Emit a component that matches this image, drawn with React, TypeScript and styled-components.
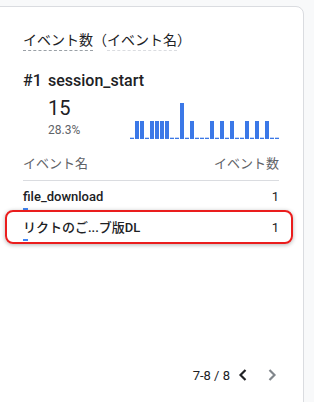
import React from "react";
import styled, { createGlobalStyle } from "styled-components";

const GlobalStyle = createGlobalStyle`
  html, body {
    margin: 0;
    padding: 0;
    background: #f8f9fa;
    overflow: hidden;
    height: 100%;
  }
  body {
    font-family: Roboto, "Noto Sans CJK JP", "Noto Sans", sans-serif;
    color: #202124;
  }
`;

const Card = styled.div`
  box-sizing: border-box;
  margin: 6px 0 0 -10px;
  width: 314px;
  height: 420px;
  background: #fff;
  border: 1px solid #dadce0;
  border-radius: 8px;
  padding: 24px 24px 0 32px;
  display: flex;
  flex-direction: column;
`;

const Title = styled.div`
  display: flex;
  align-items: flex-start;
  font-size: 14px;
  line-height: 19px;
  color: #202124;
`;

const Dimension = styled.span<{ $light?: boolean }>`
  display: inline-block;
  line-height: 19px;
  border-bottom: 1px dashed ${(p) => (p.$light ? "#dadce0" : "#9aa0a6")};
`;

const Paren = styled.span`
  display: inline-block;
  line-height: 19px;
`;

const Heading = styled.div`
  margin-top: 18px;
  font-size: 16px;
  line-height: 24px;
  font-weight: 500;
  color: #202124;
  display: flex;
`;

const Rank = styled.span`
  width: 25px;
  flex: none;
`;

const StatRow = styled.div`
  margin-top: 3px;
  display: flex;
  align-items: flex-end;
`;

const StatBlock = styled.div`
  box-sizing: border-box;
  width: 107px;
  padding-left: 25px;
  display: flex;
  flex-direction: column;
`;

const BigNumber = styled.div`
  font-size: 20px;
  line-height: 24px;
  color: #202124;
`;

const Percent = styled.div`
  margin-top: 2px;
  font-size: 12px;
  line-height: 17px;
  color: #5f6368;
`;

const Chart = styled.svg`
  display: block;
  flex: none;
`;

const TableHeader = styled.div`
  margin-top: 15px;
  display: flex;
  justify-content: space-between;
  font-size: 13px;
  line-height: 20px;
  color: #5f6368;
  padding-bottom: 6px;
  border-bottom: 1px solid #dadce0;
`;

const Row = styled.div`
  position: relative;
  padding: 6px 0 2px;
`;

const RowLine = styled.div`
  display: flex;
  justify-content: space-between;
  font-size: 13px;
  line-height: 20px;
`;

const RowName = styled.span`
  font-weight: 500;
  color: #202124;
`;

const RowValue = styled.span`
  color: #202124;
`;

const RowBar = styled.div`
  margin-top: 1px;
  height: 2px;
  background: #4285f4;
`;

const Highlight = styled.div`
  position: absolute;
  top: -2px;
  bottom: -1px;
  left: -18px;
  right: -14px;
  border: 2px solid #ea1d1d;
  border-radius: 8px;
  box-shadow: 0 1px 4px rgba(0, 0, 0, 0.3);
  pointer-events: none;
`;

const Pagination = styled.div`
  margin-top: 120px;
  margin-right: -3px;
  display: flex;
  justify-content: flex-end;
  align-items: center;
  height: 24px;
  font-size: 13px;
  color: #202124;
`;

const PageLabel = styled.span`
  margin-right: 3px;
`;

const PageButton = styled.button<{ $disabled?: boolean }>`
  width: 20px;
  height: 24px;
  padding: 0;
  margin: 0 0 0 ${(p) => (p.$disabled ? "9px" : "0")};
  border: none;
  background: none;
  display: flex;
  align-items: center;
  justify-content: center;
  color: ${(p) => (p.$disabled ? "#80868b" : "#202124")};
`;

const bars = [0, 1, 1, 0, 1, 1, 1, 1, 0, 0, 2, 0, 1, 0, 0, 0, 1, 0, 1, 0, 1, 0, 0, 1, 0, 1, 0, 1, 0, 0];

const rows = [
  { name: "file_download", count: 1, highlighted: false },
  { name: "リクトのご...ブ版DL", count: 1, highlighted: true },
];

const Chevron = ({ dir }: { dir: "left" | "right" }) => (
  <svg width="20" height="20" viewBox="0 0 24 24" fill="none">
    <path
      d={dir === "left" ? "M15 6l-6 6 6 6" : "M9 6l6 6-6 6"}
      stroke="currentColor"
      strokeWidth="2.6"
      strokeLinecap="butt"
      strokeLinejoin="miter"
    />
  </svg>
);

export default function App() {
  const chartH = 36;
  return (
    <>
      <GlobalStyle />
      <Card>
        <Title>
          <Dimension>イベント数</Dimension>
          <Paren>（</Paren>
          <Dimension $light>イベント名</Dimension>
          <Paren>）</Paren>
        </Title>
        <Heading>
          <Rank>#1</Rank>
          <span>session_start</span>
        </Heading>
        <StatRow>
          <StatBlock>
            <BigNumber>15</BigNumber>
            <Percent>28.3%</Percent>
          </StatBlock>
          <Chart width={149} height={chartH} viewBox={`0 0 149 ${chartH}`}>
            {bars.map((v, i) => {
              const h = v === 0 ? 1.3 : v * 18;
              return <rect key={i} x={i * 5} y={chartH - h} width={4} height={h} fill="#3b78e7" />;
            })}
          </Chart>
        </StatRow>
        <TableHeader>
          <span>イベント名</span>
          <span>イベント数</span>
        </TableHeader>
        {rows.map((r) => (
          <Row key={r.name}>
            <RowLine>
              <RowName>{r.name}</RowName>
              <RowValue>{r.count}</RowValue>
            </RowLine>
            <RowBar style={{ width: `${(r.count / 53) * 256}px` }} />
            {r.highlighted && <Highlight />}
          </Row>
        ))}
        <Pagination>
          <PageLabel>7-8 / 8</PageLabel>
          <PageButton aria-label="前へ">
            <Chevron dir="left" />
          </PageButton>
          <PageButton $disabled aria-label="次へ">
            <Chevron dir="right" />
          </PageButton>
        </Pagination>
      </Card>
    </>
  );
}
